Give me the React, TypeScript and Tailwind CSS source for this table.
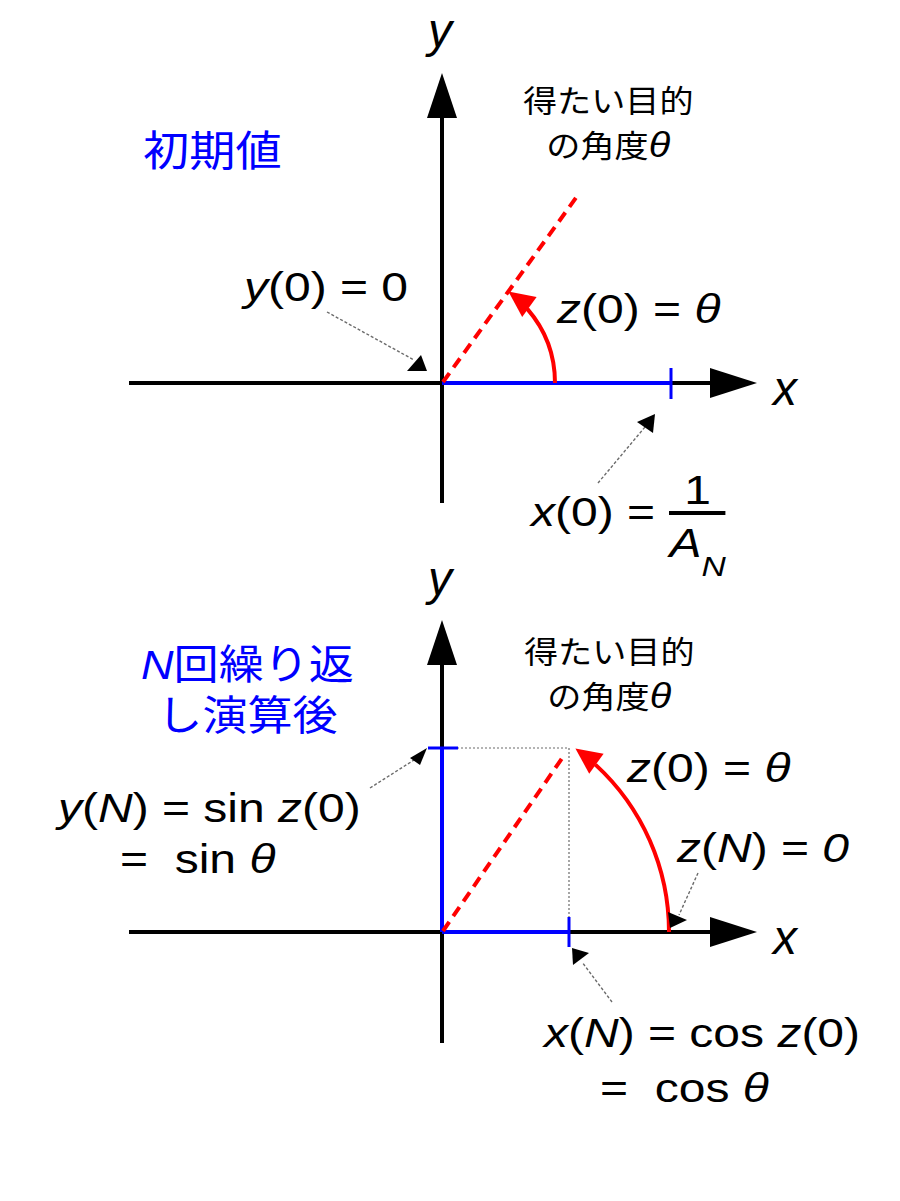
import React from "react";

const latin = "font-['Liberation_Sans',Arial,sans-serif]";
const math = "absolute whitespace-pre leading-none origin-left scale-x-[1.2] text-[40px] text-black font-['Liberation_Sans',Arial,sans-serif]";
const axisLabel = "absolute leading-none text-[48px] italic text-black font-['Liberation_Sans',Arial,sans-serif]";
const jp = "absolute whitespace-pre text-center origin-left scale-x-[1.1] font-['Noto_Sans_CJK_JP',sans-serif]";

function Arrowhead({ points, fill = "#000" }: { points: string; fill?: string }) {
  return <polygon points={points} fill={fill} />;
}

// dotted pointer from a label to the thing it names
function Leader({ x1, y1, x2, y2, head }: { x1: number; y1: number; x2: number; y2: number; head: string }) {
  return (
    <g>
      <line x1={x1} y1={y1} x2={x2} y2={y2} stroke="#6b6b6b" strokeWidth={1.4} strokeDasharray="3 2" />
      <polygon points={head} fill="#000" />
    </g>
  );
}

function Axes({ cx, cy, top, bottom }: { cx: number; cy: number; top: number; bottom: number }) {
  return (
    <g>
      <line x1={cx} y1={top + 40} x2={cx} y2={bottom} stroke="#000" strokeWidth={4} />
      <Arrowhead points={`${cx},${top} ${cx - 15},${top + 45} ${cx + 15},${top + 45}`} />
      <line x1={129} y1={cy} x2={714} y2={cy} stroke="#000" strokeWidth={4} />
      <Arrowhead points={`757,${cy} 710,${cy - 15} 710,${cy + 15}`} />
    </g>
  );
}

function TargetAngle({ className }: { className: string }) {
  return (
    <div className={`${jp} text-[31px] leading-[45px] text-black ${className}`}>
      得たい目的
      <br />
      の角度<i className={`${latin} text-[36px] leading-none`}>θ</i>
    </div>
  );
}

function InitialPanel() {
  return (
    <div className="relative h-[560px] w-[900px]">
      <svg width="900" height="560" className="block">
        <Axes cx={442} cy={383} top={73} bottom={503} />
        <line x1={442} y1={383} x2={671} y2={383} stroke="#0000ff" strokeWidth={4} />
        <line x1={671} y1={368} x2={671} y2={399} stroke="#0000ff" strokeWidth={3} />
        <line x1={443} y1={382} x2={578} y2={195} stroke="#ff0000" strokeWidth={4} strokeDasharray="11 7" />
        <path d="M 555 383 A 113 113 0 0 0 527.3 308.9" fill="none" stroke="#ff0000" strokeWidth={4} />
        <Arrowhead points="508.4,291.6 536.6,296.9 522.2,316.9" fill="#ff0000" />
        <Leader x1={327} y1={312} x2={414} y2={360} head="407,371 427,371 421,355" />
        <Leader x1={598} y1={483} x2={645} y2={427} head="637,422 655,414 653,433" />
      </svg>

      <div className={`${axisLabel} left-[428px] top-[7px]`}>y</div>
      <div className={`${axisLabel} left-[773px] top-[365px]`}>x</div>

      <div className={`${jp} left-[143px] top-[127px] text-[42px] leading-none text-[#0000ff]`}>初期値</div>
      <TargetAngle className="left-[523px] top-[76px]" />

      <div className={`${math} left-[244px] top-[267px]`}>
        <i>y</i>(0) = 0
      </div>
      <div className={`${math} left-[557px] top-[289px]`}>
        <i>z</i>(0) = <i>θ</i>
      </div>

      <div className={`${math} left-[531px] top-[470px] flex items-start`}>
        <span className="mt-[22px]">
          <i>x</i>(0) =
        </span>
        <span className="ml-[12px] flex w-[47px] flex-col items-center">
          <span>1</span>
          <span className="mt-[1px] h-[4px] w-full bg-black" />
          <span className="mt-[8px] flex items-start">
            <i>A</i>
            <i className="mt-[30px] text-[28px]">N</i>
          </span>
        </span>
      </div>
    </div>
  );
}

function IteratedPanel() {
  return (
    <div className="relative h-[641px] w-[900px]">
      <svg width="900" height="641" className="block">
        <Axes cx={442} cy={372} top={60} bottom={483} />
        <line x1={457} y1={188} x2={569} y2={188} stroke="#6b6b6b" strokeWidth={1.2} strokeDasharray="2 2" />
        <line x1={569} y1={188} x2={569} y2={372} stroke="#6b6b6b" strokeWidth={1.2} strokeDasharray="2 2" />
        <line x1={442} y1={372} x2={442} y2={188} stroke="#0000ff" strokeWidth={4} />
        <line x1={428} y1={188} x2={458} y2={188} stroke="#0000ff" strokeWidth={3} />
        <line x1={442} y1={372} x2={569} y2={372} stroke="#0000ff" strokeWidth={4} />
        <line x1={569} y1={357} x2={569} y2={387} stroke="#0000ff" strokeWidth={3} />
        <line x1={443} y1={371} x2={565} y2={194} stroke="#ff0000" strokeWidth={4} strokeDasharray="11 7" />
        <path d="M 669 372 A 227 227 0 0 0 595.4 204.6" fill="none" stroke="#ff0000" strokeWidth={4} />
        <Arrowhead points="575.4,188.4 603.6,193.7 589.2,213.7" fill="#ff0000" />
        <Leader x1={370} y1={228} x2={414} y2={200} head="410,198 427,188 420,205" />
        <Leader x1={698} y1={313} x2={679} y2={355} head="668,352 687,360 670,368" />
        <Leader x1={612} y1={442} x2={582} y2={402} head="572,388 589,393 573,405" />
      </svg>

      <div className={`${axisLabel} left-[428px] top-[-5px]`}>y</div>
      <div className={`${axisLabel} left-[773px] top-[354px]`}>x</div>

      <div className={`${jp} left-[141px] top-[78px] text-[41px] leading-[47px] text-[#0000ff]`}>
        <i className={latin}>N</i>回繰り返
        <br />
        し演算後
      </div>
      <TargetAngle className="left-[524px] top-[67px]" />

      <div className={`${math} left-[627px] top-[188px]`}>
        <i>z</i>(0) = <i>θ</i>
      </div>
      <div className={`${math} left-[677px] top-[268px]`}>
        <i>z</i>(<i>N</i>) = <i>0</i>
      </div>
      <div className={`${math} left-[58px] top-[228px]`}>
        <i>y</i>(<i>N</i>) = sin <i>z</i>(0)
      </div>
      <div className={`${math} left-[120px] top-[279px]`}>
        =  sin <i>θ</i>
      </div>
      <div className={`${math} left-[544px] top-[453px]`}>
        <i>x</i>(<i>N</i>) = cos <i>z</i>(0)
      </div>
      <div className={`${math} left-[600px] top-[508px]`}>
        =  cos <i>θ</i>
      </div>
    </div>
  );
}

export default function App() {
  return (
    <div className="flex h-[1201px] w-[900px] flex-col overflow-hidden bg-white">
      <InitialPanel />
      <IteratedPanel />
    </div>
  );
}
